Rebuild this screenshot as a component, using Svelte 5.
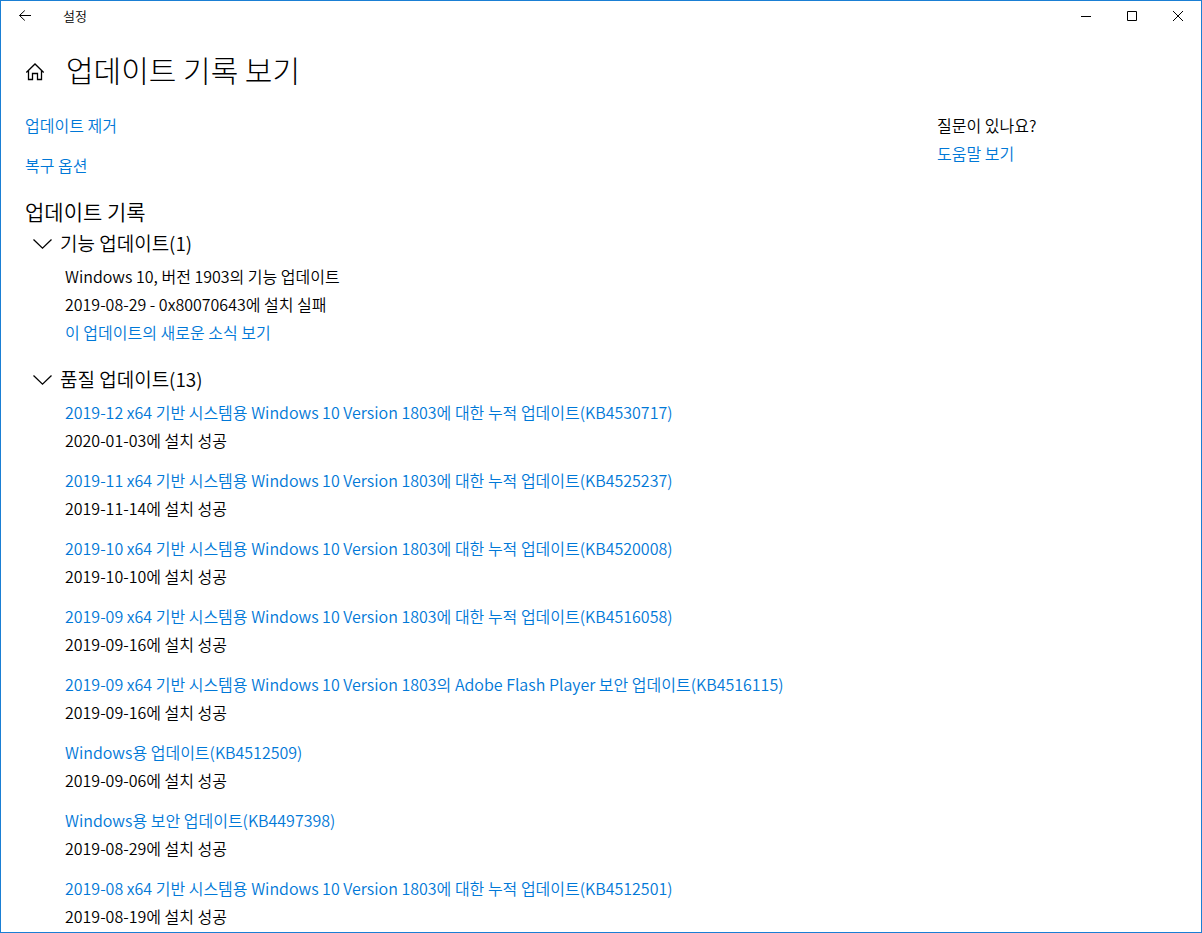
<script>
    let featureOpen = $state(true);
    let qualityOpen = $state(true);

    const qualityUpdates = [
        { title: "2019-12 x64 기반 시스템용 Windows 10 Version 1803에 대한 누적 업데이트(KB4530717)", date: "2020-01-03" },
        { title: "2019-11 x64 기반 시스템용 Windows 10 Version 1803에 대한 누적 업데이트(KB4525237)", date: "2019-11-14" },
        { title: "2019-10 x64 기반 시스템용 Windows 10 Version 1803에 대한 누적 업데이트(KB4520008)", date: "2019-10-10" },
        { title: "2019-09 x64 기반 시스템용 Windows 10 Version 1803에 대한 누적 업데이트(KB4516058)", date: "2019-09-16" },
        { title: "2019-09 x64 기반 시스템용 Windows 10 Version 1803의 Adobe Flash Player 보안 업데이트(KB4516115)", date: "2019-09-16" },
        { title: "Windows용 업데이트(KB4512509)", date: "2019-09-06" },
        { title: "Windows용 보안 업데이트(KB4497398)", date: "2019-08-29" },
        { title: "2019-08 x64 기반 시스템용 Windows 10 Version 1803에 대한 누적 업데이트(KB4512501)", date: "2019-08-19" },
    ];
</script>

{#snippet chevron(open)}
    <svg class="chevron" class:closed={!open} width="20" height="14" viewBox="0 -2 20 14" aria-hidden="true">
        <path d="M1.5 1.5 L10.5 10.2 L19.5 1.5" />
    </svg>
{/snippet}

<div class="window">
    <header class="titlebar">
        <button class="back" aria-label="뒤로">
            <svg width="14" height="12" viewBox="0 0 14 12" aria-hidden="true">
                <path d="M13 5.5 H1.5 M6.8 0.5 L1.5 5.5 L6.8 10.5" />
            </svg>
        </button>
        <span class="app-name">설정</span>
        <div class="controls">
            <button aria-label="최소화">
                <svg width="10" height="10" viewBox="0 0 10 10" aria-hidden="true"><path d="M0 5.5 H10" /></svg>
            </button>
            <button aria-label="최대화">
                <svg width="10" height="10" viewBox="0 0 10 10" aria-hidden="true"><path d="M0.5 0.5 H9.5 V9.5 H0.5 Z" /></svg>
            </button>
            <button aria-label="닫기">
                <svg width="10" height="10" viewBox="0 0 10 10" aria-hidden="true"><path d="M0 0 L10 10 M10 0 L0 10" /></svg>
            </button>
        </div>
    </header>

    <div class="page-head">
        <button class="home" aria-label="홈">
            <svg width="20" height="24" viewBox="0 -4 20 24" aria-hidden="true">
                <path d="M1.3 11.5 L10 3 L18.7 11.5 M3.5 9.5 V18.5 H7.5 V12.5 H12.5 V18.5 H16.5 V9.5" />
            </svg>
        </button>
        <h1>업데이트 기록 보기</h1>
    </div>

    <div class="columns">
        <main>
            <nav>
                <a href="#uninstall">업데이트 제거</a>
                <a href="#recovery">복구 옵션</a>
            </nav>

            <h2>업데이트 기록</h2>

            <section>
                <h3>
                    <button aria-expanded={featureOpen} onclick={() => (featureOpen = !featureOpen)}>
                        {@render chevron(featureOpen)}
                        기능 업데이트(1)
                    </button>
                </h3>
                {#if featureOpen}
                    <ul>
                        <li>
                            <span>Windows 10, 버전 1903의 기능 업데이트</span>
                            <span>2019-08-29 - 0x80070643에 설치 실패</span>
                            <a href="#whats-new">이 업데이트의 새로운 소식 보기</a>
                        </li>
                    </ul>
                {/if}
            </section>

            <section>
                <h3>
                    <button aria-expanded={qualityOpen} onclick={() => (qualityOpen = !qualityOpen)}>
                        {@render chevron(qualityOpen)}
                        품질 업데이트(13)
                    </button>
                </h3>
                {#if qualityOpen}
                    <ul>
                        {#each qualityUpdates as update}
                            <li>
                                <a href="#kb">{update.title}</a>
                                <span>{update.date}에 설치 성공</span>
                            </li>
                        {/each}
                    </ul>
                {/if}
            </section>
        </main>

        <aside>
            <span>질문이 있나요?</span>
            <a href="#help">도움말 보기</a>
        </aside>
    </div>
</div>

<style>
    :global(body) {
        background: #fff;
    }

    .window {
        box-sizing: border-box;
        min-height: 100vh;
        border: 1px solid #1a7fd4;
        background: #fff;
        color: #000;
        font-family: "Noto Sans CJK KR", sans-serif;
        font-size: 16px;
        font-weight: 350;
        line-height: 28px;
    }

    button {
        display: flex;
        align-items: center;
        padding: 0;
        border: 0;
        background: none;
        color: inherit;
        font: inherit;
    }

    svg {
        display: block;
        fill: none;
        stroke: #000;
        stroke-width: 1;
    }

    a {
        color: #0078d7;
        text-decoration: none;
    }

    a:hover {
        color: #666;
    }

    .titlebar {
        display: flex;
        align-items: center;
        height: 30px;
    }

    .back {
        justify-content: center;
        width: 48px;
        height: 30px;
    }

    .app-name {
        flex: 1;
        padding-left: 14px;
        font-size: 13px;
    }

    .controls {
        display: flex;
    }

    .controls button {
        justify-content: center;
        width: 46px;
        height: 30px;
    }

    .page-head {
        display: flex;
        align-items: center;
        gap: 21px;
        padding: 14px 24px 0;
    }

    .home svg,
    .chevron {
        stroke-width: 1.3;
    }

    h1,
    h2,
    h3 {
        margin: 0;
        font-weight: 350;
    }

    h1 {
        font-size: 30px;
        font-weight: 300;
        line-height: 48px;
    }

    .columns {
        display: grid;
        grid-template-columns: minmax(0, 1fr) 240px;
        gap: 24px;
        padding: 18px 24px 0;
    }

    nav,
    aside,
    li {
        display: flex;
        flex-direction: column;
        align-items: flex-start;
    }

    nav {
        gap: 12px;
    }

    h2 {
        margin: 18px 0 2px;
        font-size: 21px;
        line-height: 29px;
    }

    section + section {
        margin-top: 18px;
    }

    h3 {
        margin-bottom: 4px;
        padding-left: 7px;
        font-size: 19px;
        line-height: 30px;
    }

    h3 button {
        gap: 8px;
    }

    .closed {
        transform: rotate(-90deg);
    }

    ul {
        display: flex;
        flex-direction: column;
        gap: 12px;
        margin: 0;
        padding: 0 0 0 40px;
        list-style: none;
    }
</style>
